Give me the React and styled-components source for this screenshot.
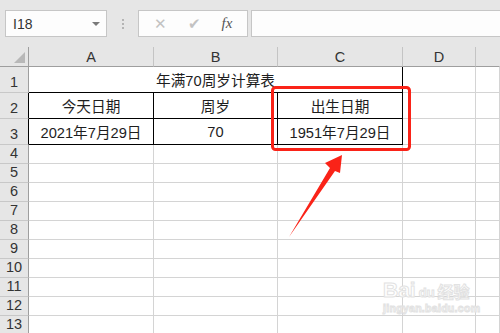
import React from "react";
import styled, { createGlobalStyle } from "styled-components";

const GlobalStyle = createGlobalStyle`
  html, body {
    margin: 0;
    padding: 0;
    background: #ffffff;
    overflow: hidden;
  }
  * {
    box-sizing: border-box;
  }
`;

const Page = styled.div`
  position: relative;
  width: 500px;
  height: 333px;
  overflow: hidden;
  font-family: "Liberation Sans", "Noto Sans CJK SC", sans-serif;
  color: #222;
`;

const Toolbar = styled.div`
  height: 47px;
  background: #e6e6e6;
  display: flex;
  align-items: flex-start;
  padding: 10px 0 0 5px;
`;

const NameBox = styled.div`
  width: 102px;
  height: 27px;
  background: #fdfdfd;
  border: 1px solid #c6c6c6;
  display: flex;
  align-items: center;
  justify-content: space-between;
  padding: 0 6px 0 7px;
  font-size: 14px;
  color: #333;
`;

const DropArrow = styled.span`
  width: 0;
  height: 0;
  border-left: 4px solid transparent;
  border-right: 4px solid transparent;
  border-top: 4px solid #7a7a7a;
`;

const Grip = styled.div`
  width: 31px;
  height: 27px;
  display: flex;
  flex-direction: column;
  align-items: center;
  justify-content: center;
  gap: 2px;

  span {
    width: 2px;
    height: 2px;
    background: #b4b4b4;
  }
`;

const FxBox = styled.div`
  width: 110px;
  height: 27px;
  background: #fdfdfd;
  border: 1px solid #c6c6c6;
  display: flex;
  align-items: center;
  justify-content: space-around;
  padding: 0 4px;
  color: #c2c2c2;
  font-size: 15px;
`;

const FxLabel = styled.span`
  font-family: "Liberation Serif", serif;
  font-style: italic;
  font-size: 15px;
  color: #555;
`;

const FormulaInput = styled.div`
  flex: 1;
  height: 27px;
  margin-left: 3px;
  background: #fdfdfd;
  border: 1px solid #c6c6c6;
  border-right: none;
`;

const Sheet = styled.div`
  display: grid;
  grid-template-columns: 29px 125px 124px 125px 73px 1fr;
  grid-template-rows: 20px 26px 26px 26px;
  grid-auto-rows: 19px;
`;

const Corner = styled.div`
  background: #e6e6e6;
  border-right: 1px solid #9e9e9e;
  border-bottom: 1px solid #9e9e9e;
  position: relative;

  &::after {
    content: "";
    position: absolute;
    right: 3px;
    bottom: 3px;
    width: 0;
    height: 0;
    border-left: 11px solid transparent;
    border-bottom: 11px solid #b8b8b8;
  }
`;

const ColHead = styled.div`
  background: #e6e6e6;
  border-right: 1px solid ${(p) => (p.$last ? "transparent" : "#c4c4c4")};
  border-bottom: 1px solid #9e9e9e;
  display: flex;
  align-items: center;
  justify-content: center;
  font-size: 14.5px;
  color: #333;
`;

const RowHead = styled.div`
  background: #e6e6e6;
  border-right: 1px solid ${(p) => (p.$dark ? "#000" : "#9e9e9e")};
  border-bottom: 1px solid #c8c8c8;
  display: flex;
  align-items: flex-end;
  justify-content: center;
  padding-bottom: 1px;
  font-size: 14.5px;
  line-height: 17px;
  color: #333;
`;

const Cell = styled.div`
  grid-column: span ${(p) => p.$span || 1};
  border-right: 1px solid ${(p) => (p.$br ? "#000" : "#d4d4d4")};
  border-bottom: 1px solid ${(p) => (p.$bb ? "#000" : "#d4d4d4")};
  display: flex;
  align-items: center;
  justify-content: center;
  font-family: "Liberation Sans", "Noto Sans CJK SC", sans-serif;
  font-size: 14.67px;
  color: #1e1e1e;
  white-space: nowrap;
`;

const Overlay = styled.svg`
  position: absolute;
  left: 0;
  top: 0;
  pointer-events: none;
`;

const Watermark = styled.div`
  position: absolute;
  left: 383px;
  top: 279px;
  display: flex;
  flex-direction: column;
  align-items: flex-start;
  pointer-events: none;
  color: #ffffff;
  -webkit-text-stroke: 1px #e2e2e2;
`;

const MarkTop = styled.div`
  display: flex;
  align-items: flex-end;
  gap: 1px;
  font-family: "Liberation Sans", sans-serif;
  font-weight: bold;
  font-size: 21px;
  line-height: 22px;
`;

const Paw = styled.span`
  font-size: 13px;
  line-height: 16px;
  padding: 0 2px;
`;

const MarkCn = styled.span`
  font-family: "Noto Sans CJK SC", sans-serif;
  font-size: 16px;
  line-height: 20px;
`;

const MarkUrl = styled.div`
  font-family: "Liberation Sans", sans-serif;
  font-weight: bold;
  font-size: 10.5px;
  letter-spacing: 0.3px;
  margin-top: 1px;
`;

const columns = ["A", "B", "C", "D", ""];

const App = () => {
  const blankRows = [];
  for (let r = 4; r <= 13; r++) {
    blankRows.push(
      <React.Fragment key={r}>
        <RowHead>{r}</RowHead>
        <Cell />
        <Cell />
        <Cell />
        <Cell />
        <Cell />
      </React.Fragment>
    );
  }

  return (
    <Page>
      <GlobalStyle />
      <Toolbar>
        <NameBox>
          <span>I18</span>
          <DropArrow />
        </NameBox>
        <Grip>
          <span />
          <span />
          <span />
        </Grip>
        <FxBox>
          <span>✕</span>
          <span>✔</span>
          <FxLabel>fx</FxLabel>
        </FxBox>
        <FormulaInput />
      </Toolbar>

      <Sheet>
        <Corner />
        {columns.map((c, i) => (
          <ColHead key={i} $last={i === columns.length - 1}>
            {c}
          </ColHead>
        ))}

        <RowHead>1</RowHead>
        <Cell $span={3} $br $bb>
          年满70周岁计算表
        </Cell>
        <Cell />
        <Cell />

        <RowHead $dark>2</RowHead>
        <Cell $br $bb>今天日期</Cell>
        <Cell $br $bb>周岁</Cell>
        <Cell $br $bb>出生日期</Cell>
        <Cell />
        <Cell />

        <RowHead $dark>3</RowHead>
        <Cell $br $bb>2021年7月29日</Cell>
        <Cell $br $bb>70</Cell>
        <Cell $br $bb>1951年7月29日</Cell>
        <Cell />
        <Cell />

        {blankRows}
      </Sheet>

      <Watermark>
        <MarkTop>
          <span>Bai</span>
          <Paw>du</Paw>
          <MarkCn>经验</MarkCn>
        </MarkTop>
        <MarkUrl>jingyan.baidu.com</MarkUrl>
      </Watermark>

      <Overlay width="500" height="333" viewBox="0 0 500 333">
        <rect
          x="272.5"
          y="87.5"
          width="137"
          height="62"
          rx="3"
          fill="none"
          stroke="#fa2318"
          strokeWidth="3"
        />
        <polygon
          points="289,237 330,168 325,163 342,155 340,173 335,171"
          fill="#fa2318"
        />
      </Overlay>
    </Page>
  );
};

export default App;
